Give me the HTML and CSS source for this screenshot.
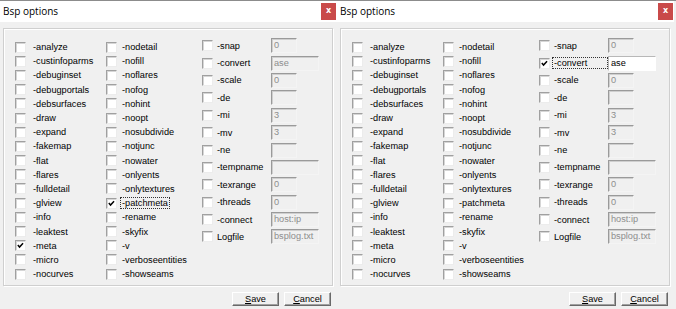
FILE: index.html
```html
<!DOCTYPE html>
<html lang="en">
<head>
    <meta charset="UTF-8">
    <link rel="stylesheet" href="styles.css">
    <title>Bsp options</title>
</head>
<body>
<div class="desk">

    <!-- first dialog: -meta and -patchmeta on -->
    <div class="window">
        <div class="titlebar">
            <span class="title">Bsp options</span>
            <span class="close">x</span>
        </div>
        <div class="body">
            <div class="panel">
                <div class="col col-a">
                    <div class="row"><span class="cb"></span><span class="lbl">-analyze</span></div>
                    <div class="row"><span class="cb"></span><span class="lbl">-custinfoparms</span></div>
                    <div class="row"><span class="cb"></span><span class="lbl">-debuginset</span></div>
                    <div class="row"><span class="cb"></span><span class="lbl">-debugportals</span></div>
                    <div class="row"><span class="cb"></span><span class="lbl">-debsurfaces</span></div>
                    <div class="row"><span class="cb"></span><span class="lbl">-draw</span></div>
                    <div class="row"><span class="cb"></span><span class="lbl">-expand</span></div>
                    <div class="row"><span class="cb"></span><span class="lbl">-fakemap</span></div>
                    <div class="row"><span class="cb"></span><span class="lbl">-flat</span></div>
                    <div class="row"><span class="cb"></span><span class="lbl">-flares</span></div>
                    <div class="row"><span class="cb"></span><span class="lbl">-fulldetail</span></div>
                    <div class="row"><span class="cb"></span><span class="lbl">-glview</span></div>
                    <div class="row"><span class="cb"></span><span class="lbl">-info</span></div>
                    <div class="row"><span class="cb"></span><span class="lbl">-leaktest</span></div>
                    <div class="row"><span class="cb on"><svg viewBox="0 0 11 11"><polyline points="2.2,5 4.3,7.4 8.6,2.8"/></svg></span><span class="lbl">-meta</span></div>
                    <div class="row"><span class="cb"></span><span class="lbl">-micro</span></div>
                    <div class="row"><span class="cb"></span><span class="lbl">-nocurves</span></div>
                </div>
                <div class="col col-b">
                    <div class="row"><span class="cb"></span><span class="lbl">-nodetail</span></div>
                    <div class="row"><span class="cb"></span><span class="lbl">-nofill</span></div>
                    <div class="row"><span class="cb"></span><span class="lbl">-noflares</span></div>
                    <div class="row"><span class="cb"></span><span class="lbl">-nofog</span></div>
                    <div class="row"><span class="cb"></span><span class="lbl">-nohint</span></div>
                    <div class="row"><span class="cb"></span><span class="lbl">-noopt</span></div>
                    <div class="row"><span class="cb"></span><span class="lbl">-nosubdivide</span></div>
                    <div class="row"><span class="cb"></span><span class="lbl">-notjunc</span></div>
                    <div class="row"><span class="cb"></span><span class="lbl">-nowater</span></div>
                    <div class="row"><span class="cb"></span><span class="lbl">-onlyents</span></div>
                    <div class="row"><span class="cb"></span><span class="lbl">-onlytextures</span></div>
                    <div class="row"><span class="cb on"><svg viewBox="0 0 11 11"><polyline points="2.2,5 4.3,7.4 8.6,2.8"/></svg></span><span class="lbl focus">-patchmeta</span></div>
                    <div class="row"><span class="cb"></span><span class="lbl">-rename</span></div>
                    <div class="row"><span class="cb"></span><span class="lbl">-skyfix</span></div>
                    <div class="row"><span class="cb"></span><span class="lbl">-v</span></div>
                    <div class="row"><span class="cb"></span><span class="lbl">-verboseentities</span></div>
                    <div class="row"><span class="cb"></span><span class="lbl">-showseams</span></div>
                </div>
                <div class="col col-c">
                    <div class="row"><span class="cb"></span><span class="lbl">-snap</span><span class="field">0</span></div>
                    <div class="row"><span class="cb"></span><span class="lbl">-convert</span><span class="field wide">ase</span></div>
                    <div class="row"><span class="cb"></span><span class="lbl">-scale</span><span class="field">0</span></div>
                    <div class="row"><span class="cb"></span><span class="lbl">-de</span><span class="field"></span></div>
                    <div class="row"><span class="cb"></span><span class="lbl">-mi</span><span class="field">3</span></div>
                    <div class="row"><span class="cb"></span><span class="lbl">-mv</span><span class="field">3</span></div>
                    <div class="row"><span class="cb"></span><span class="lbl">-ne</span><span class="field"></span></div>
                    <div class="row"><span class="cb"></span><span class="lbl">-tempname</span><span class="field wide"></span></div>
                    <div class="row"><span class="cb"></span><span class="lbl">-texrange</span><span class="field">0</span></div>
                    <div class="row"><span class="cb"></span><span class="lbl">-threads</span><span class="field">0</span></div>
                    <div class="row"><span class="cb"></span><span class="lbl">-connect</span><span class="field wide">host:ip</span></div>
                    <div class="row"><span class="cb"></span><span class="lbl">Logfile</span><span class="field wide">bsplog.txt</span></div>
                </div>
            </div>
            <div class="buttons">
                <span class="btn"><u>S</u>ave</span>
                <span class="btn"><u>C</u>ancel</span>
            </div>
        </div>
    </div>

    <!-- second dialog: -convert on, its field enabled -->
    <div class="window">
        <div class="titlebar">
            <span class="title">Bsp options</span>
            <span class="close">x</span>
        </div>
        <div class="body">
            <div class="panel">
                <div class="col col-a">
                    <div class="row"><span class="cb"></span><span class="lbl">-analyze</span></div>
                    <div class="row"><span class="cb"></span><span class="lbl">-custinfoparms</span></div>
                    <div class="row"><span class="cb"></span><span class="lbl">-debuginset</span></div>
                    <div class="row"><span class="cb"></span><span class="lbl">-debugportals</span></div>
                    <div class="row"><span class="cb"></span><span class="lbl">-debsurfaces</span></div>
                    <div class="row"><span class="cb"></span><span class="lbl">-draw</span></div>
                    <div class="row"><span class="cb"></span><span class="lbl">-expand</span></div>
                    <div class="row"><span class="cb"></span><span class="lbl">-fakemap</span></div>
                    <div class="row"><span class="cb"></span><span class="lbl">-flat</span></div>
                    <div class="row"><span class="cb"></span><span class="lbl">-flares</span></div>
                    <div class="row"><span class="cb"></span><span class="lbl">-fulldetail</span></div>
                    <div class="row"><span class="cb"></span><span class="lbl">-glview</span></div>
                    <div class="row"><span class="cb"></span><span class="lbl">-info</span></div>
                    <div class="row"><span class="cb"></span><span class="lbl">-leaktest</span></div>
                    <div class="row"><span class="cb"></span><span class="lbl">-meta</span></div>
                    <div class="row"><span class="cb"></span><span class="lbl">-micro</span></div>
                    <div class="row"><span class="cb"></span><span class="lbl">-nocurves</span></div>
                </div>
                <div class="col col-b">
                    <div class="row"><span class="cb"></span><span class="lbl">-nodetail</span></div>
                    <div class="row"><span class="cb"></span><span class="lbl">-nofill</span></div>
                    <div class="row"><span class="cb"></span><span class="lbl">-noflares</span></div>
                    <div class="row"><span class="cb"></span><span class="lbl">-nofog</span></div>
                    <div class="row"><span class="cb"></span><span class="lbl">-nohint</span></div>
                    <div class="row"><span class="cb"></span><span class="lbl">-noopt</span></div>
                    <div class="row"><span class="cb"></span><span class="lbl">-nosubdivide</span></div>
                    <div class="row"><span class="cb"></span><span class="lbl">-notjunc</span></div>
                    <div class="row"><span class="cb"></span><span class="lbl">-nowater</span></div>
                    <div class="row"><span class="cb"></span><span class="lbl">-onlyents</span></div>
                    <div class="row"><span class="cb"></span><span class="lbl">-onlytextures</span></div>
                    <div class="row"><span class="cb"></span><span class="lbl">-patchmeta</span></div>
                    <div class="row"><span class="cb"></span><span class="lbl">-rename</span></div>
                    <div class="row"><span class="cb"></span><span class="lbl">-skyfix</span></div>
                    <div class="row"><span class="cb"></span><span class="lbl">-v</span></div>
                    <div class="row"><span class="cb"></span><span class="lbl">-verboseentities</span></div>
                    <div class="row"><span class="cb"></span><span class="lbl">-showseams</span></div>
                </div>
                <div class="col col-c">
                    <div class="row"><span class="cb"></span><span class="lbl">-snap</span><span class="field">0</span></div>
                    <div class="row"><span class="cb on"><svg viewBox="0 0 11 11"><polyline points="2.2,5 4.3,7.4 8.6,2.8"/></svg></span><span class="lbl focus">-convert</span><span class="field wide live">ase</span></div>
                    <div class="row"><span class="cb"></span><span class="lbl">-scale</span><span class="field">0</span></div>
                    <div class="row"><span class="cb"></span><span class="lbl">-de</span><span class="field"></span></div>
                    <div class="row"><span class="cb"></span><span class="lbl">-mi</span><span class="field">3</span></div>
                    <div class="row"><span class="cb"></span><span class="lbl">-mv</span><span class="field">3</span></div>
                    <div class="row"><span class="cb"></span><span class="lbl">-ne</span><span class="field"></span></div>
                    <div class="row"><span class="cb"></span><span class="lbl">-tempname</span><span class="field wide"></span></div>
                    <div class="row"><span class="cb"></span><span class="lbl">-texrange</span><span class="field">0</span></div>
                    <div class="row"><span class="cb"></span><span class="lbl">-threads</span><span class="field">0</span></div>
                    <div class="row"><span class="cb"></span><span class="lbl">-connect</span><span class="field wide">host:ip</span></div>
                    <div class="row"><span class="cb"></span><span class="lbl">Logfile</span><span class="field wide">bsplog.txt</span></div>
                </div>
            </div>
            <div class="buttons">
                <span class="btn"><u>S</u>ave</span>
                <span class="btn"><u>C</u>ancel</span>
            </div>
        </div>
    </div>

</div>
</body>
</html>
```

FILE: styles.css
```css
body {
    margin: 0;
    background-color: #f0f0f0;
    font-family: 'Liberation Sans', Arial, sans-serif;
    font-size: 9.2px;
    color: #000;
}

.desk {
    display: flex;
    width: 676px;
    height: 309px;
    border-top: 1px solid #8c8c8c;
    box-sizing: border-box;
    overflow: hidden;
}

.window {
    width: 337px;
    flex: none;
    display: flex;
    flex-direction: column;
    background-color: #f0f0f0;
}

/* title bar */
.titlebar {
    height: 21px;
    background-color: #fff;
    display: flex;
    align-items: flex-start;
    justify-content: space-between;
}

.title {
    font-family: 'Open Sans', 'Noto Sans', sans-serif;
    font-size: 10px;
    line-height: 21px;
    padding-left: 3px;
    color: #000;
}

.close {
    width: 15px;
    height: 17px;
    margin-top: 2px;
    margin-right: 1px;
    background-color: #c94a4a;
    color: #fff;
    font-family: 'DejaVu Sans', sans-serif;
    font-size: 8px;
    font-weight: bold;
    line-height: 15px;
    text-align: center;
}

.body {
    padding: 6px 4px 0 3px;
}

/* group box */
.panel {
    height: 258px;
    box-sizing: border-box;
    border: 1px solid #cfcfcf;
    box-shadow: inset 1px 1px 0 #fff, 1px 1px 0 #fff;
    display: flex;
}

.col {
    display: flex;
    flex-direction: column;
}

.col-a {
    width: 91px;
    padding: 11px 0 0 11px;
}

.col-b {
    width: 96px;
    padding-top: 11px;
}

.col-c {
    padding-top: 8px;
}

.row {
    height: 14.2px;
    display: flex;
    align-items: center;
    white-space: nowrap;
}

.col-c .row {
    height: 17.4px;
}

/* checkbox */
.cb {
    width: 11px;
    height: 11px;
    box-sizing: border-box;
    flex: none;
    background-color: #fff;
    border: 1px solid;
    border-color: #a0a0a0 #ececec #ececec #a0a0a0;
    box-shadow: inset 1px 1px 0 #d6d6d6;
}

.cb svg {
    display: block;
    width: 9px;
    height: 9px;
}

.cb polyline {
    fill: none;
    stroke: #000;
    stroke-width: 1.8;
}

.lbl {
    padding: 0 1px;
    border: 1px dotted transparent;
    line-height: 10px;
}

.col-a .lbl { margin-left: 5px; }
.col-b .lbl { margin-left: 3px; }
.col-c .lbl { margin-left: 2px; width: 52px; }

.lbl.focus {
    border-color: #333;
}

/* edit fields */
.field {
    width: 26px;
    height: 15px;
    box-sizing: border-box;
    border: 1px solid;
    border-color: #9a9a9a #f4f4f4 #f4f4f4 #9a9a9a;
    box-shadow: inset 1px 1px 0 #cfcfcf;
    background-color: #f0f0f0;
    color: #8d8d8d;
    padding: 0 2px;
    line-height: 13px;
    overflow: hidden;
}

.field.wide {
    width: 48px;
}

.field.live {
    background-color: #fff;
    color: #000;
    border-color: #b8b8b8 #fff #fff #b8b8b8;
    box-shadow: none;
}

/* dialog buttons */
.buttons {
    display: flex;
    justify-content: flex-end;
    gap: 5px;
    padding: 6px 2px 0 0;
}

.btn {
    width: 47px;
    height: 14px;
    box-sizing: border-box;
    border: 1px solid;
    border-color: #fff #696969 #696969 #fff;
    box-shadow: inset -1px -1px 0 #a0a0a0;
    text-align: center;
    line-height: 12px;
}
```
